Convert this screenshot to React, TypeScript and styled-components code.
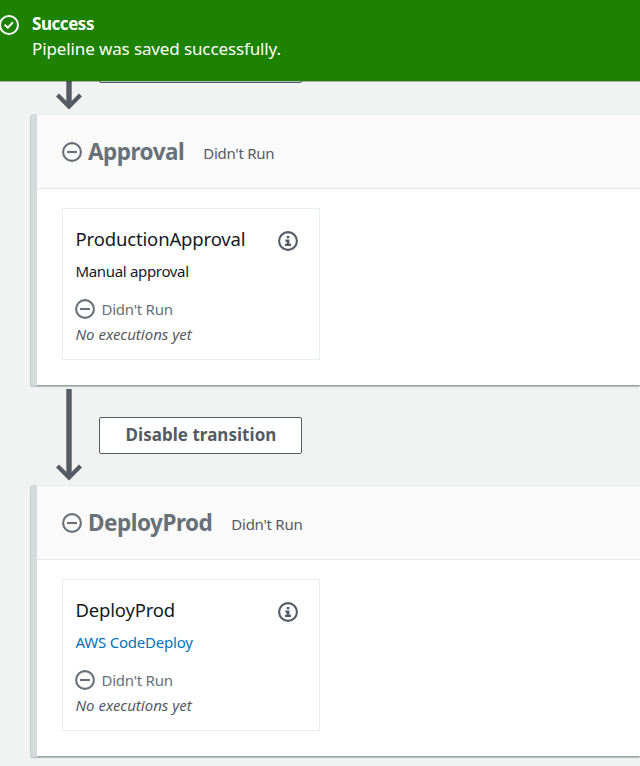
import React from "react";
import styled, { createGlobalStyle } from "styled-components";

const GlobalStyle = createGlobalStyle`
  * { box-sizing: border-box; }
  body {
    margin: 0;
    background: #f1f3f3;
    font-family: "Noto Sans", "Open Sans", sans-serif;
    overflow: hidden;
  }
`;

const Page = styled.main`
  width: 640px;
  height: 766px;
  overflow: hidden;
  background: #f1f3f3;
`;

const Banner = styled.header`
  position: relative;
  z-index: 1;
  display: flex;
  gap: 13px;
  height: 81px;
  padding-top: 11px;
  background: #1d8102;
  box-shadow: 0 1px 0 rgba(0, 28, 36, 0.3);
  color: #fff;

  svg {
    margin: 4px 0 0 -1px;
  }
`;

const Text = styled.span<{ $size: number; $spacing?: number }>`
  display: block;
  font-size: ${(p) => p.$size}px;
  letter-spacing: ${(p) => p.$spacing ?? 0}px;
  white-space: nowrap;
`;

const BannerLine = styled(Text)<{ $strong?: boolean }>`
  height: 25px;
  line-height: 25px;
  font-weight: ${(p) => (p.$strong ? 700 : 400)};
`;

const Pipeline = styled.div`
  display: flex;
  flex-direction: column;
  margin: -66px 0 0 31px;
`;

const Transition = styled.div`
  display: flex;
  height: 99px;
  padding: 3px 0 0 24px;
`;

const TransitionButton = styled.button`
  width: 203px;
  height: 37px;
  margin: 28px 0 0 16px;
  padding: 0 0 0 1px;
  border: 1px solid #545b64;
  border-radius: 2px;
  background: #fff;
  color: #545b64;
  font-family: inherit;
  font-weight: 700;
  display: flex;
  justify-content: center;
  line-height: 34px;
`;

const Stage = styled.section`
  height: 272px;
  border-left: 6px solid #d5dbdb;
  border-radius: 2px 0 0 2px;
  background: #fff;
  box-shadow: 0 1px 1px 0 rgba(0, 28, 36, 0.1), -1px 1px 1px rgba(0, 28, 36, 0.18),
    inset 0 -1px 0 #95a5a6;
`;

const StageHeader = styled.div`
  display: flex;
  height: 75px;
  padding: 27px 0 0 25px;
  border-top: 1px solid #eaeded;
  border-bottom: 1px solid #e6eaea;
  background: #fafafa;
`;

const StageName = styled(Text)`
  margin: -7px 19px 0 6px;
  line-height: 33px;
  font-weight: 700;
  color: #687078;
`;

const StageStatus = styled(Text)`
  line-height: 22px;
  color: #545b64;
`;

const ActionCard = styled.article`
  width: 258px;
  height: 152px;
  margin: 19px 0 0 25px;
  padding: 18px 21px 0 12.5px;
  border: 1px solid #eaeded;
  background: #fff;
`;

const CardTitle = styled.div`
  display: flex;
  justify-content: space-between;
  height: 32px;
  color: #16191f;
  line-height: 24px;

  svg {
    margin-top: 4px;
  }
`;

const Provider = styled(Text)<{ $link?: boolean }>`
  height: 39px;
  line-height: 24px;
  color: ${(p) => (p.$link ? "#0073bb" : "#16191f")};
`;

const CardStatus = styled.div`
  display: flex;
  gap: 7px;
  height: 25px;
  line-height: 22px;
  color: #687078;

  svg {
    margin: 1px 0 0 -1px;
  }
`;

const Note = styled(Text)`
  line-height: 22px;
  font-style: italic;
  color: #545b64;
`;

const Icon = styled.svg`
  flex: none;
  display: block;
  overflow: visible;
`;

const SuccessIcon = () => (
  <Icon width="20" height="20" viewBox="0 0 20 20" fill="none" stroke="#fff" strokeWidth="2">
    <circle cx="10" cy="10" r="9" />
    <path d="M5.6 9.8 8.8 12.7 14 7.3" />
  </Icon>
);

const MinusIcon = () => (
  <Icon width="20" height="20" viewBox="0 0 20 20" fill="none" stroke="#687078" strokeWidth="2.1">
    <circle cx="10" cy="10" r="8.9" />
    <path d="M5 10H15" />
  </Icon>
);

const InfoIcon = () => (
  <Icon width="20" height="20" viewBox="0 0 20 20">
    <circle cx="10" cy="10" r="8.9" fill="none" stroke="#545b64" strokeWidth="2.1" />
    <path d="M8.7 5h2.7v2.3H8.7zM7.4 8.5h4v4.3H13V15H7v-2.2h1.7v-2.1H7.4z" fill="#545b64" />
  </Icon>
);

const Arrow = () => (
  <Icon width="28" height="94" viewBox="0 0 28 94" fill="none" stroke="#545b64">
    <path d="M14 0V87" strokeWidth="5.4" />
    <path d="M2.5 77 14 88.5 25.5 77" strokeWidth="4.2" />
  </Icon>
);

type StageData = {
  name: string;
  nameSpacing: number;
  action: string;
  actionSpacing: number;
  provider: string;
  providerSpacing: number;
  link?: boolean;
};

const stages: StageData[] = [
  {
    name: "Approval",
    nameSpacing: -0.5,
    action: "ProductionApproval",
    actionSpacing: -0.15,
    provider: "Manual approval",
    providerSpacing: -0.33,
  },
  {
    name: "DeployProd",
    nameSpacing: -0.48,
    action: "DeployProd",
    actionSpacing: -0.2,
    provider: "AWS CodeDeploy",
    providerSpacing: -0.22,
    link: true,
  },
];

const PipelineStage = ({ stage }: { stage: StageData }) => (
  <Stage>
    <StageHeader>
      <MinusIcon />
      <StageName as="h2" $size={22.5} $spacing={stage.nameSpacing}>{stage.name}</StageName>
      <StageStatus $size={15} $spacing={-0.27}>Didn't Run</StageStatus>
    </StageHeader>
    <ActionCard>
      <CardTitle>
        <Text $size={18.5} $spacing={stage.actionSpacing}>{stage.action}</Text>
        <InfoIcon />
      </CardTitle>
      <Provider as={stage.link ? "a" : "span"} $size={15} $spacing={stage.providerSpacing} $link={stage.link}>
        {stage.provider}
      </Provider>
      <CardStatus>
        <MinusIcon />
        <Text $size={15} $spacing={-0.25}>Didn't Run</Text>
      </CardStatus>
      <Note $size={15}>No executions yet</Note>
    </ActionCard>
  </Stage>
);

export default function App() {
  return (
    <Page>
      <GlobalStyle />
      <Banner>
        <SuccessIcon />
        <div>
          <BannerLine $size={17} $spacing={-0.45} $strong>Success</BannerLine>
          <BannerLine $size={17} $spacing={-0.12}>Pipeline was saved successfully.</BannerLine>
        </div>
      </Banner>
      <Pipeline>
        <Transition>
          <Arrow />
          <TransitionButton aria-label="Transition" />
        </Transition>
        <PipelineStage stage={stages[0]} />
        <Transition>
          <Arrow />
          <TransitionButton>
            <Text $size={17} $spacing={0.03}>Disable transition</Text>
          </TransitionButton>
        </Transition>
        <PipelineStage stage={stages[1]} />
      </Pipeline>
    </Page>
  );
}
